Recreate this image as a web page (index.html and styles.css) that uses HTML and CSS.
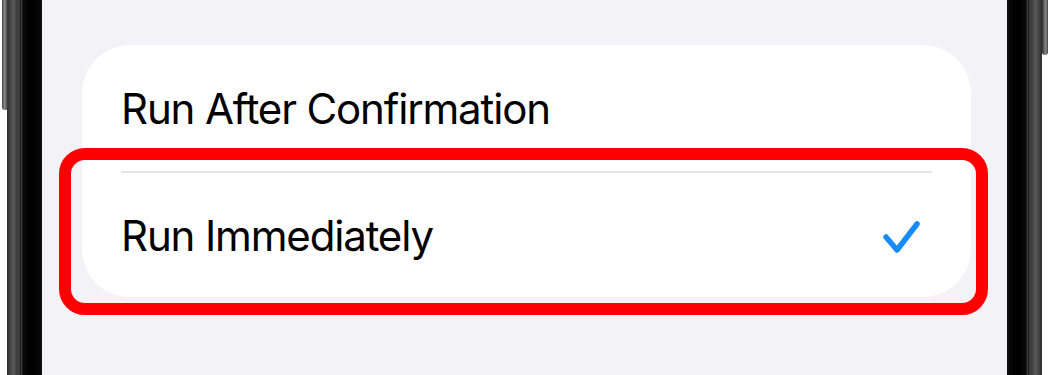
FILE: index.html
```html
<!DOCTYPE html>
<html lang="en">
<head>
<meta charset="utf-8">
<title>Run Options</title>
<link rel="stylesheet" href="styles.css">
</head>
<body>
<div class="stage">
  <div class="outside outside-left"><div class="side-button side-button-left"></div></div>
  <div class="bezel bezel-left"></div>
  <div class="screen">
    <div class="card">
      <div class="row row-first">
        <span class="label">Run After Confirmation</span>
      </div>
      <div class="separator"></div>
      <div class="row row-second">
        <span class="label">Run Immediately</span>
        <svg class="check" width="40" height="40" viewBox="0 0 40 40" aria-hidden="true">
          <path d="M5 22 L16 35 L36 9" fill="none" stroke="#168cfa" stroke-width="5.5" stroke-linecap="round" stroke-linejoin="round"/>
        </svg>
      </div>
    </div>
    <div class="highlight"></div>
  </div>
  <div class="bezel bezel-right"></div>
  <div class="outside outside-right"><div class="side-button side-button-right"></div></div>
</div>
</body>
</html>
```

FILE: styles.css
```css
html, body {
  margin: 0;
  padding: 0;
  background: #ffffff;
}

.stage {
  display: flex;
  width: 1050px;
  height: 375px;
  overflow: hidden;
  font-family: Inter, "Noto Sans", "Liberation Sans", sans-serif;
}

.outside {
  position: relative;
  width: 7px;
  flex: none;
  background: #ffffff;
}

.outside-right {
  width: 8px;
}

.side-button {
  position: absolute;
  top: 0;
  width: 6px;
  border-radius: 0 0 3px 3px;
}

.side-button-left {
  left: 2px;
  height: 110px;
  background: linear-gradient(to right, #3c3c3c 0%, #8a8a8a 40%, #5a5a5a 75%, #2e2e2e 100%);
}

.side-button-right {
  left: 0;
  height: 55px;
  background: linear-gradient(to right, #2e2e2e 0%, #5a5a5a 30%, #8a8a8a 65%, #3c3c3c 100%);
}

.bezel {
  width: 35px;
  flex: none;
}

.bezel-left {
  background: linear-gradient(to right,
    #2b2b2b 0px, #4a4a4a 4px, #5a5a5a 7px, #3a3a3a 10px,
    #454545 12px, #1e1e1e 13.5px, #3c3c3c 14.5px, #0a0a0a 16px,
    #000000 22px, #050505 32px, #111111 35px);
}

.bezel-right {
  background: linear-gradient(to left,
    #2b2b2b 0px, #4a4a4a 4px, #5a5a5a 7px, #3a3a3a 10px,
    #454545 12px, #1e1e1e 13.5px, #3c3c3c 14.5px, #0a0a0a 16px,
    #000000 22px, #050505 32px, #111111 35px);
}

.screen {
  position: relative;
  flex: 1;
  background: #f2f2f7;
  padding: 45px 36px 0 40px;
}

.card {
  background: #ffffff;
  border-radius: 48px;
  display: flex;
  flex-direction: column;
}

.row {
  display: flex;
  align-items: center;
  justify-content: space-between;
  padding: 0 50px 0 39px;
}

.row-first {
  height: 126px;
}

.row-second {
  height: 124px;
}

.label {
  font-size: 42px;
  color: #000000;
  letter-spacing: -1.15px;
}

.separator {
  height: 2px;
  margin: 0 39px;
  background: #e4e4e8;
}

.check {
  display: block;
  flex: none;
}

.highlight {
  position: absolute;
  left: 17px;
  top: 148px;
  width: 929px;
  height: 167px;
  box-sizing: border-box;
  border: 12.5px solid #ff0000;
  border-radius: 26px;
}
```
